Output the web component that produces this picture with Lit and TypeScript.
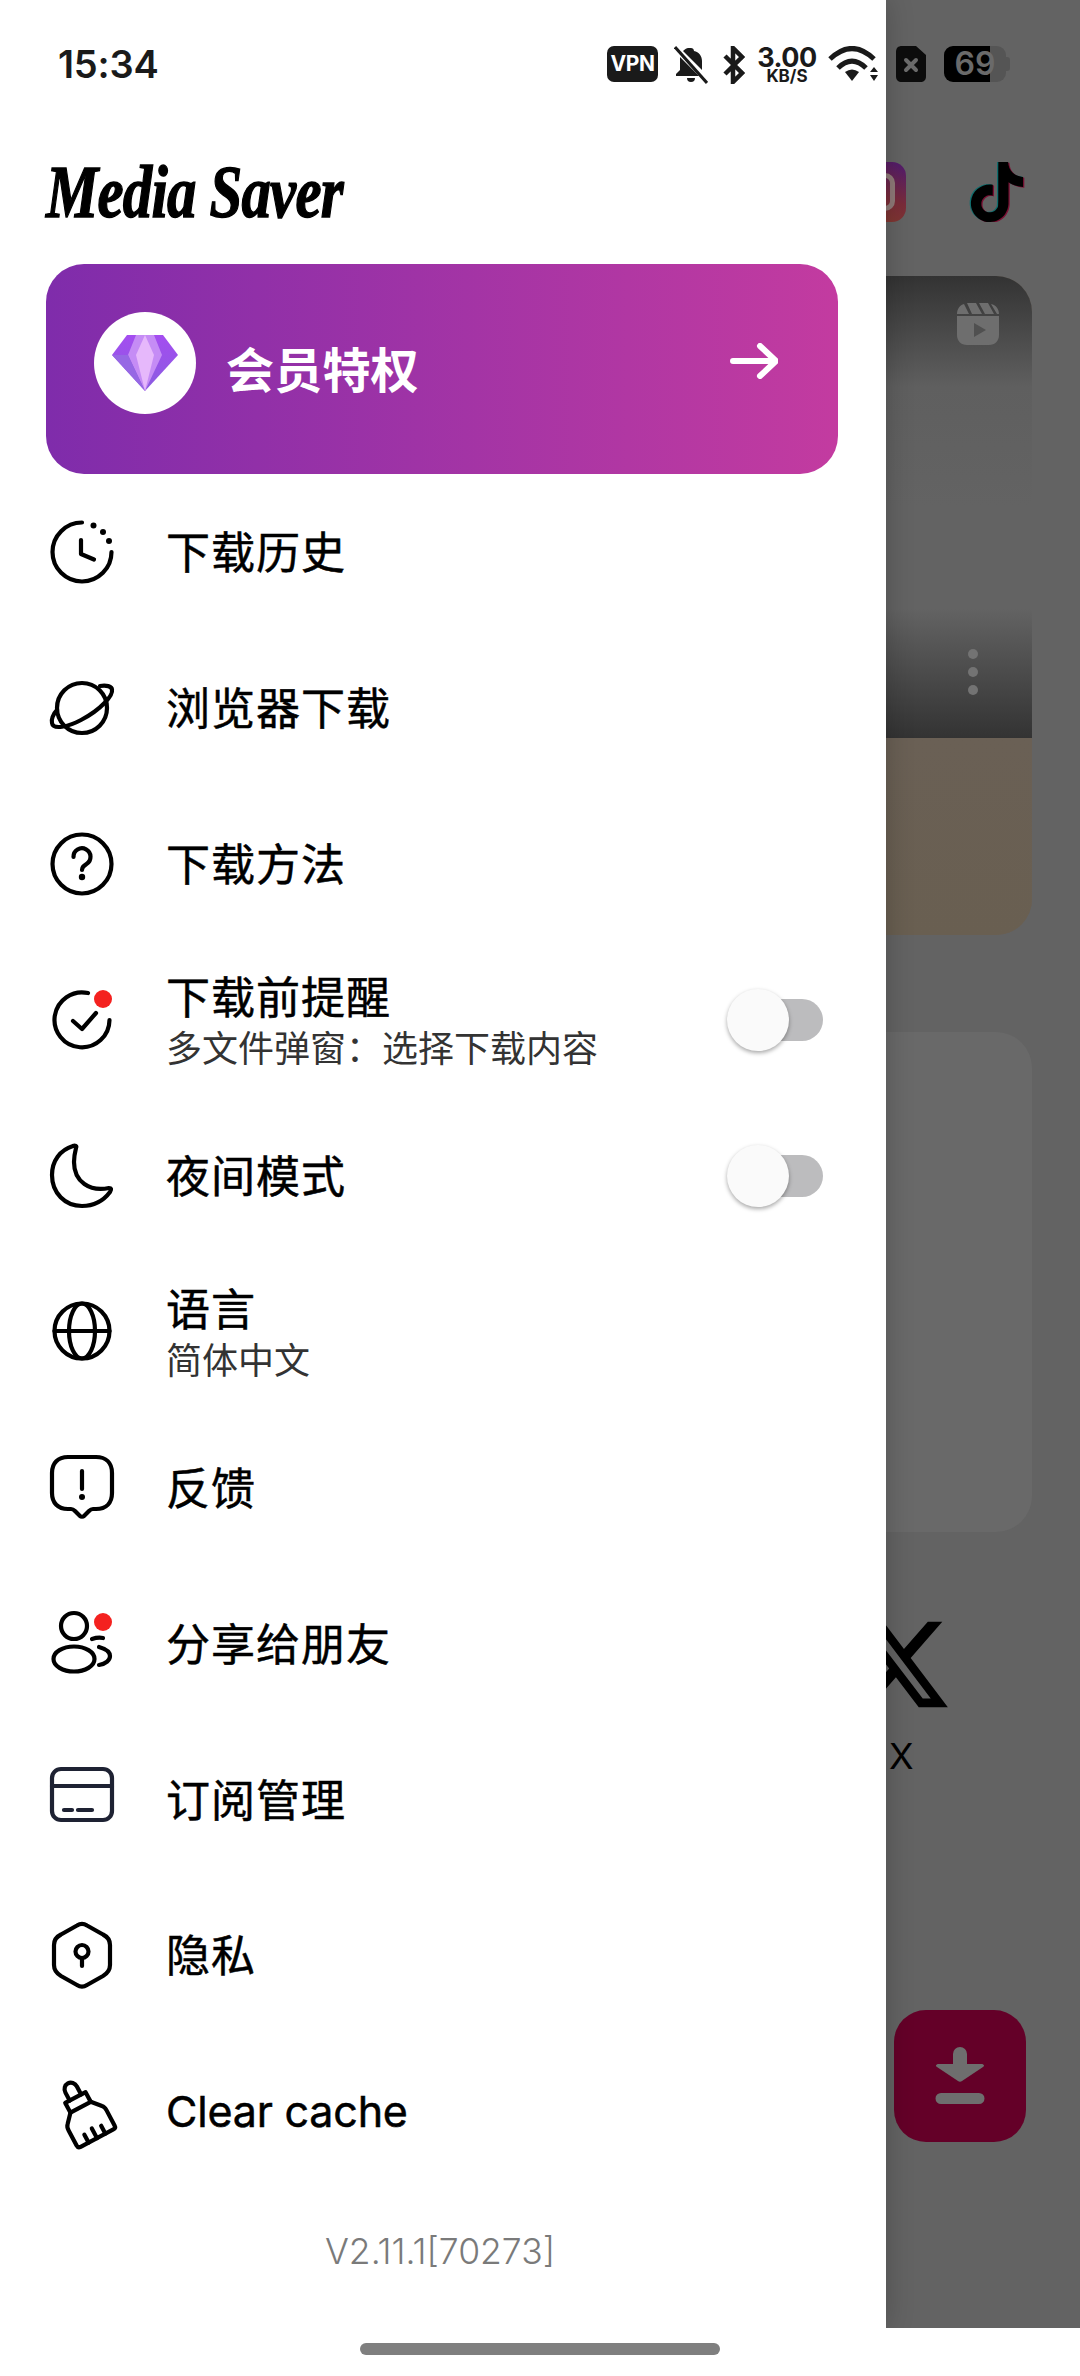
import { LitElement, html, css, svg } from "lit";
import { customElement } from "lit/decorators.js";

const ICONS: Record<string, unknown> = {
  clock: svg`<path d="M32 2.5A29.5 29.5 0 1 0 61.5 32"/><path d="M31 20V34L44 39.5"/><g fill="#000" stroke="none"><circle cx="43.5" cy="5.5" r="3"/><circle cx="53" cy="12" r="3"/><circle cx="59" cy="21" r="3"/></g>`,
  planet: svg`<circle cx="32" cy="32" r="25"/><path d="M50 10C56 9 62 10 62 14C63 19 52 33 31 44C18 51 3 54 2 47C1 44 3 38 7 34"/>`,
  help: svg`<circle cx="32" cy="32" r="29.5"/><path d="M23.5 25a8.5 8.5 0 1 1 13 7c-3 2-4.500 3-4.500 6"/><circle cx="32" cy="45" r="3.2" fill="#000" stroke="none"/>`,
  check: svg`<path d="M38 5A27.500 27.500 0 1 0 59.500 32"/><path d="M23 33L32 41L46 25"/>`,
  moon: svg`<path d="M26 4C27 2 25 1 23 2C10 6 2 17 2 31C2 49 15 62 32 62C44 62 54 56 60 48C62 45 61 44 59 44C40 48 24 38 24 18C24 13 25 8 26 4Z"/>`,
  globe: svg`<circle cx="32" cy="32" r="27.5"/><ellipse cx="32" cy="32" rx="13" ry="27.5"/><path d="M4.500 32H59.500"/>`,
  feedback: svg`<path d="M18 2H46C56 2 62 8 62 18V38C62 48 56 54 46 54H43C41 54 40 55 39 56L34 61C33 62 31 62 30 61L25 56C24 55 23 54 21 54H18C8 54 2 48 2 38V18C2 8 8 2 18 2Z"/><path d="M32 16V34"/><circle cx="32" cy="42" r="3" fill="#000" stroke="none"/>`,
  share: svg`<circle cx="24" cy="15" r="13"/><ellipse cx="24" cy="48" rx="20.5" ry="12.5"/><path d="M42 28Q48 26 53 27"/><path d="M49 36C56 38 60 41 60 45C60 49 56 53 49 54"/>`,
  card: svg`<rect x="2" y="2" width="60" height="51" rx="9" stroke="#1e2233"/><path d="M2 19H62" stroke="#1e2233"/><path d="M14 43H22M28 43H42" stroke="#1e2233"/>`,
  shield: svg`<path d="M27 2.500C30 0.500 34 0.500 37 2.500L53 11.500C58 14 60 17 60 22V42C60 47 58 50 53 53L37 62C34 64 30 64 27 62L11 53C6 50 4 47 4 42V22C4 17 6 14 11 11.500Z"/><circle cx="32" cy="28.500" r="6.500"/><path d="M32 35V43"/>`,
  brush: svg`<g transform="rotate(-28 32 32)"><path d="M26 17V8C26 4 29 1 32.5 1S39 4 39 8V17"/><path d="M21 17H44V28H21Z"/><path d="M21 28L13 37C11 39 11 41 11 43V60C11 62 12 63 14 63H51C53 63 54 62 54 60V43C54 41 54 39 52 37L44 28"/><path d="M23 63V54M32.5 63V52M42 63V54"/></g>`,
};

interface Row { icon: string; label: string; sub?: string; toggle?: boolean; dot?: boolean; }
const ROWS: Row[] = [
  { icon: "clock", label: "下载历史" },
  { icon: "planet", label: "浏览器下载" },
  { icon: "help", label: "下载方法" },
  { icon: "check", label: "下载前提醒", sub: "多文件弹窗：选择下载内容", toggle: true, dot: true },
  { icon: "moon", label: "夜间模式", toggle: true },
  { icon: "globe", label: "语言", sub: "简体中文" },
  { icon: "feedback", label: "反馈" },
  { icon: "share", label: "分享给朋友", dot: true },
  { icon: "card", label: "订阅管理" },
  { icon: "shield", label: "隐私" },
  { icon: "brush", label: "Clear cache" },
];

const TIKTOK = "M12.525.02c1.31-.02 2.61-.01 3.91-.02.08 1.53.63 3.09 1.75 4.17 1.12 1.11 2.7 1.62 4.24 1.79v4.03c-1.44-.05-2.89-.35-4.2-.97-.57-.26-1.1-.59-1.62-.93-.01 2.92.01 5.84-.02 8.75-.08 1.4-.54 2.79-1.35 3.94-1.31 1.92-3.58 3.17-5.91 3.21-1.43.08-2.86-.31-4.08-1.03-2.02-1.19-3.44-3.37-3.65-5.71-.02-.5-.03-1-.01-1.49.18-1.9 1.12-3.72 2.58-4.96 1.66-1.44 3.98-2.13 6.15-1.72.02 1.48-.04 2.96-.04 4.44-.99-.32-2.15-.23-3.02.37-.63.41-1.11 1.04-1.36 1.75-.21.51-.15 1.07-.14 1.61.24 1.64 1.82 3.02 3.5 2.87 1.12-.01 2.19-.66 2.77-1.61.19-.33.4-.67.41-1.06.1-1.79.06-3.57.07-5.36.01-4.03-.01-8.05.02-12.07z";

@customElement("app-root")
export class AppRoot extends LitElement {
  static styles = css`
    :host { display: block; width: 1080px; height: 2376px; position: relative; overflow: hidden; background: #fff;
      font-family: "Inter", "Noto Sans CJK SC", sans-serif; color: #000; }
    * { box-sizing: border-box; }
    .screen { display: flex; height: 2328px; overflow: hidden; }
    .drawer { width: 886px; flex: none; background: #fff; position: relative; z-index: 2;
      box-shadow: 0 0 26px rgba(0,0,0,.22); padding-top: 264px; display: flex; flex-direction: column; }
    .title { position: absolute; left: 46px; top: 150px; font-family: "Liberation Serif", serif; font-style: italic; font-weight: 700;
      font-size: 74px; line-height: 84px; white-space: nowrap; transform: scaleX(.795); transform-origin: left center;
      -webkit-text-stroke: 1.4px #000; letter-spacing: -1px; }
    .vip { margin: 0 48px 0 46px; height: 210px; border-radius: 38px; background: linear-gradient(90deg, #7f2cab, #c33ba0);
      display: flex; align-items: center; padding: 0 60px 0 48px; color: #fff; flex: none; }
    .vip-badge { width: 102px; height: 102px; border-radius: 50%; background: #fff; display: flex; align-items: center; justify-content: center; flex: none; margin-top: -12px; }
    .vip-text { font: 700 48px/60px "Noto Sans CJK SC", sans-serif; margin: -4px 0 0 30px; flex: 1; letter-spacing: .2px; }
    .vip svg.arrow { margin-top: -16px; }
    .rows { display: flex; flex-direction: column; }
    .row { height: 155.9px; padding: 0 63px 0 50px; display: flex; align-items: center; flex: none; }
    .ic { width: 64px; height: 64px; flex: none; position: relative; margin-right: 52px; }
    .ic svg { display: block; fill: none; stroke: #000; stroke-width: 4.2; stroke-linecap: round; stroke-linejoin: round; overflow: visible; }
    .dot { position: absolute; right: 2px; top: 2px; width: 18px; height: 18px; border-radius: 50%; background: #f4211f; }
    .txt { flex: 1; display: flex; flex-direction: column; }
    .lbl { font: 400 44px/50px "Noto Sans CJK SC", sans-serif; color: #000; letter-spacing: 1px; -webkit-text-stroke: .5px #000; margin-top: -3px; }
    .lbl.latin { font: 400 43px/50px "Inter", sans-serif; letter-spacing: -.2px; margin-top: 0; }
    .sub { font: 400 36px/44px "Noto Sans CJK SC", sans-serif; color: #333; margin-top: 4px; margin-bottom: -2px; }
    .switch { width: 96px; height: 62px; position: relative; flex: none; display: flex; align-items: center; justify-content: flex-end; }
    .track { width: 88px; height: 42px; border-radius: 21px; background: #bcbcbe; }
    .knob { position: absolute; left: 0; top: 0; width: 62px; height: 62px; border-radius: 50%; background: #fafafa; box-shadow: 0 2px 4px rgba(0,0,0,.35); }
    .version { font: 300 35.500px/44px "Inter", sans-serif; color: #7a7a7a; text-align: center; margin-top: 41px; padding-right: 6px; }

    .backdrop { flex: 1; min-width: 0; background: #636363; display: flex; flex-direction: column; padding-top: 162px; position: relative; z-index: 1; overflow: visible; }
    .apps { display: flex; height: 60px; flex: none; }
    .ig { width: 60px; height: 60px; margin-left: -40px; border-radius: 14px; background: linear-gradient(25deg, #84402a 0%, #7a2c3a 50%, #4f1a70 100%); flex: none; display: flex; align-items: center; justify-content: center; }
    .ig i { display: block; width: 38px; height: 38px; border: 5px solid #8f7a78; border-radius: 10px; }
    .tt { margin-left: 61px; flex: none; }
    .reel { width: 146px; height: 659px; margin-top: 54px; border-radius: 0 36px 36px 0; overflow: hidden; background: #6a6054; flex: none; display: flex; flex-direction: column; }
    .reel-top { height: 462px; background: linear-gradient(180deg, #333 0%, #5f5f5f 24%, #636363 50%, #636363 72%, #333 100%);
      display: flex; flex-direction: column; justify-content: space-between; padding: 27px 0 43px 71px; }
    .dots { display: flex; flex-direction: column; gap: 8px; margin-left: 11px; }
    .dots i { width: 10px; height: 10px; border-radius: 50%; background: #737373; display: block; }
    .reel-bottom { flex: 1; background: linear-gradient(180deg, #6a6055, #695f51); }
    .panel { width: 146px; height: 500px; margin-top: 97px; border-radius: 0 36px 36px 0; background: #696969; flex: none; }
    .x { margin: 80px 0 0 -38px; flex: none; display: block; }
    .xl { font: 400 36px/40px "Inter", sans-serif; margin: 19px 0 0 3px; color: #000; }
    .fab { width: 132px; height: 132px; margin: 234px 0 0 8px; background: #640028; border-radius: 32px; display: flex; align-items: center; justify-content: center; flex: none; }

    .status { position: absolute; top: 0; left: 0; width: 1080px; height: 128px; z-index: 3; display: flex; align-items: flex-start; padding: 46px 70px 0 58px; }
    .time { font: 600 38px/36px "Inter", sans-serif; color: #1a1a1a; flex: 1; letter-spacing: -.2px; }
    .vpn { width: 51px; height: 36px; background: #1a1a1a; border-radius: 7px; color: #fff; font: 700 21px/36px "Inter", sans-serif; text-align: center; margin-right: 16px; letter-spacing: -.5px; }
    .speed { width: 58px; margin-left: 13px; margin-right: 12px; display: flex; flex-direction: column; align-items: center; color: #1a1a1a; }
    .speed b { font: 700 27px/23px "Inter", sans-serif; letter-spacing: -.5px; }
    .speed span { font: 700 17px/14px "Inter", sans-serif; }
    .status svg { display: block; flex: none; }
    .bell { margin-right: 15px; }
    .sim { margin-left: 18px; margin-right: 18px; }
    .batt { width: 66px; height: 36px; position: relative; flex: none; }
    .batt-fill { position: absolute; left: 0; top: 0; width: 62px; height: 36px; border-radius: 9px; background: linear-gradient(90deg, #000 0, #000 46px, #555 46px); }
    .batt-nub { position: absolute; right: 0; top: 11px; width: 4px; height: 14px; border-radius: 0 3px 3px 0; background: #555; }
    .batt-t { position: absolute; left: 0; top: 0; width: 62px; text-align: center; font: 600 32px/36px "Inter", sans-serif; color: #6a6a6a; }
    .pill { position: absolute; left: 360px; top: 2343px; width: 360px; height: 12px; border-radius: 6px; background: #7f7f7f; }
  `;

  row(r: Row) {
    const latin = /^[A-Za-z ]+$/.test(r.label);
    return html`<div class="row">
      <div class="ic"><svg width="64" height="64" viewBox="0 0 64 64">${ICONS[r.icon]}</svg>${r.dot ? html`<span class="dot"></span>` : ""}</div>
      <div class="txt"><div class="lbl ${latin ? "latin" : ""}">${r.label}</div>${r.sub ? html`<div class="sub">${r.sub}</div>` : ""}</div>
      ${r.toggle ? html`<div class="switch"><div class="track"></div><div class="knob"></div></div>` : ""}
    </div>`;
  }

  render() {
    return html`
      <div class="screen">
        <div class="drawer">
          <div class="title">Media Saver</div>
          <div class="vip">
            <div class="vip-badge">
              <svg width="66" height="56" viewBox="0 0 66 56">
                <defs><linearGradient id="dg" x1="0" y1="0" x2="0" y2="1"><stop offset="0" stop-color="#a44df0"/><stop offset="1" stop-color="#8a5ce0"/></linearGradient></defs>
                <path d="M15 0H51L66 20L33 56L0 20Z" fill="url(#dg)"/>
                <path d="M24 0H42L50 20L33 56L16 20Z" fill="#c58cf5"/>
                <path d="M33 0L42 20L33 56L24 20Z" fill="#e6b8fb"/>
                <path d="M0 20H16L33 56Z" fill="#9668e4"/>
              </svg>
            </div>
            <div class="vip-text">会员特权</div>
            <svg class="arrow" width="48" height="36" viewBox="0 0 48 36" fill="none" stroke="#fff" stroke-width="6" stroke-linecap="round" stroke-linejoin="round"><path d="M3 18H45M30 3L46 18L30 33"/></svg>
          </div>
          <div class="rows">${ROWS.map((r) => this.row(r))}</div>
          <div class="version">V2.11.1[70273]</div>
        </div>
        <div class="backdrop">
          <div class="apps">
            <div class="ig"><i></i></div>
            <svg class="tt" width="60" height="60" viewBox="0 0 24 24">
              <path d="${TIKTOK}" fill="#0f6e6e" transform="translate(-.5 -.2)"/>
              <path d="${TIKTOK}" fill="#7a0f33" transform="translate(.5 .3)"/>
              <path d="${TIKTOK}" fill="#000"/>
            </svg>
          </div>
          <div class="reel">
            <div class="reel-top">
              <svg width="42" height="42" viewBox="0 0 42 42"><path fill="#6e6e6e" d="M0 13H42V32C42 38 38 42 32 42H10C4 42 0 38 0 32ZM7 1L12 11H0C0 6 3 2 7 1ZM10 0H19L25 11H15ZM22 0H31L37 11H28ZM34 1C39 2 42 6 42 11H40Z"/><path fill="#505050" d="M17 20L29 27L17 34Z"/></svg>
              <div class="dots"><i></i><i></i><i></i></div>
            </div>
            <div class="reel-bottom"></div>
          </div>
          <div class="panel"></div>
          <svg class="x" width="105" height="105" viewBox="0 0 24 24"><path fill="#000" d="M18.244 2.25h3.308l-7.227 8.26 8.502 11.24H16.17l-5.214-6.817L4.99 21.75H1.68l7.73-8.835L1.254 2.25H8.08l4.713 6.231zm-1.161 17.52h1.833L7.084 4.126H5.117z"/></svg>
          <div class="xl">X</div>
          <div class="fab">
            <svg width="50" height="58" viewBox="0 0 50 58"><path fill="#6e6e6e" d="M18 7a7 7 0 0 1 14 0V17H46C49 17 50 19 48 20L27 34C26 35 24 35 23 34L2 20C0 19 1 17 4 17H18ZM6 46H44a5.500 5.500 0 0 1 0 11H6a5.500 5.500 0 0 1 0-11Z"/></svg>
          </div>
        </div>
      </div>

      <div class="status">
        <div class="time">15:34</div>
        <div class="vpn">VPN</div>
        <svg class="bell" width="34" height="38" viewBox="0 0 34 38"><path fill="#1a1a1a" d="M17 2c1.500 0 3 1 3 3 5 1 8 5 8 10v9l-19-19c2-2 4-3 5-3ZM6 11l19 19H2v-2l4-4ZM13 32h8a4 4 0 0 1-8 0Z"/><path stroke="#1a1a1a" stroke-width="3" d="M1 1L33 37"/></svg>
        <svg width="22" height="38" viewBox="0 0 22 38" fill="none" stroke="#1a1a1a" stroke-width="4.500"><path d="M2 10L19 27L10 36V2L19 11L2 28"/></svg>
        <div class="speed"><b>3.00</b><span>KB/S</span></div>
        <svg width="50" height="36" viewBox="0 0 50 36" fill="none" stroke="#1a1a1a" stroke-width="5" stroke-linejoin="round"><path d="M2 13Q24-8 46 13"/><path d="M10 22Q24 8 38 22"/><path fill="#1a1a1a" stroke="none" d="M17 26Q24 21 31 26L24 35Z"/><path fill="#1a1a1a" stroke="none" d="M42 26L46 21L50 26ZM42 29H50L46 35Z"/></svg>
        <svg class="sim" width="30" height="36" viewBox="0 0 30 36"><path fill="#0c0c0c" d="M6 0H20L30 9V30C30 34 28 36 24 36H6C2 36 0 34 0 30V6C0 2 2 0 6 0Z"/><path stroke="#6a6a6a" stroke-width="4" stroke-linecap="round" d="M10 14L20 24M20 14L10 24"/></svg>
        <div class="batt"><div class="batt-fill"></div><div class="batt-nub"></div><div class="batt-t">69</div></div>
      </div>
      <div class="pill"></div>
    `;
  }
}
